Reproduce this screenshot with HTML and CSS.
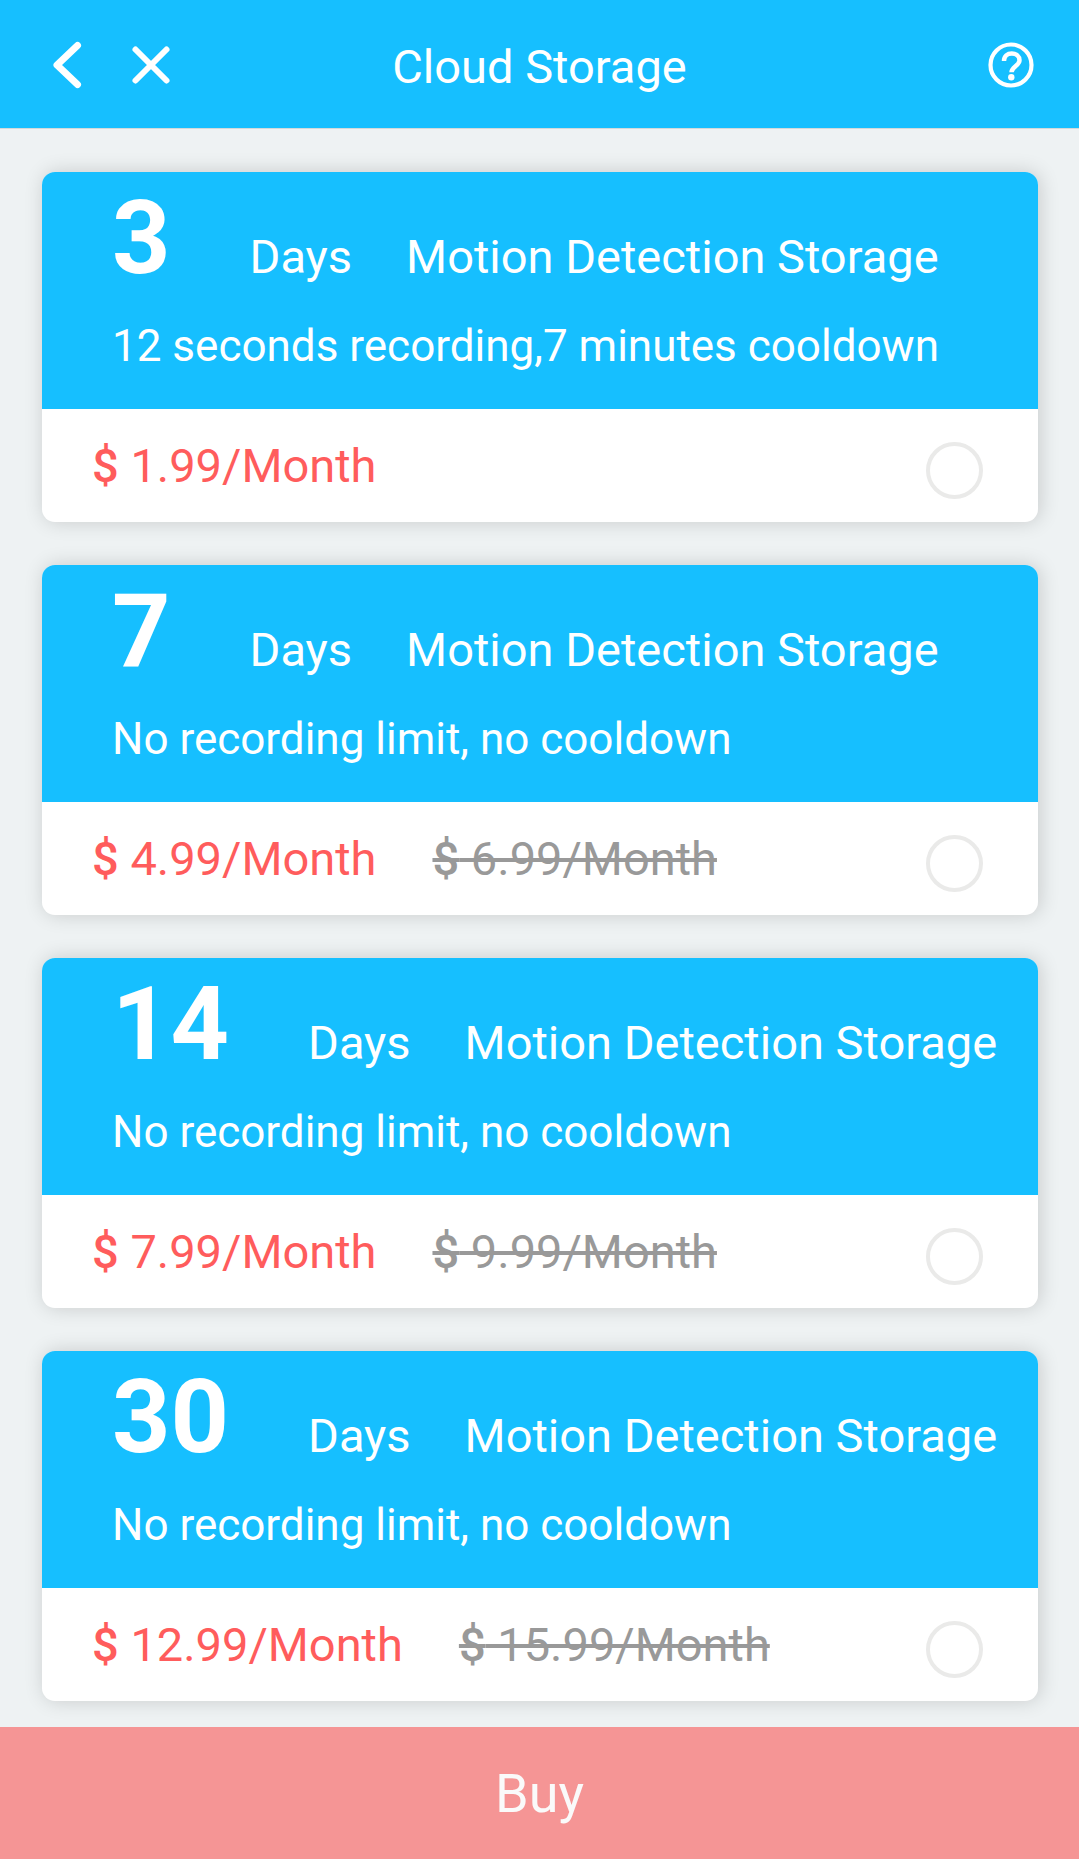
FILE: index.html
```html
<!DOCTYPE html>
<html lang="en">
<head>
    <meta charset="UTF-8">
    <meta name="viewport" content="width=device-width, initial-scale=1.0">
    <title>Cloud Storage</title>
    <link rel="stylesheet" href="styles.css">
</head>
<body>

<header class="topbar">
    <div class="topbar-left">
        <button type="button" class="icon-button" aria-label="Back">
            <svg viewBox="0 0 48 48"><path d="M33.500 4.500L13 24l20.500 19.500" stroke-width="7"/></svg>
        </button>
        <button type="button" class="icon-button" aria-label="Close">
            <svg viewBox="0 0 48 48"><path d="M8.500 8.500l31 31M39.500 8.500l-31 31" stroke-width="6"/></svg>
        </button>
    </div>
    <h1 class="title">Cloud Storage</h1>
    <div class="topbar-right">
        <button type="button" class="icon-button" aria-label="Help">
            <svg viewBox="0 0 48 48">
                <circle cx="24" cy="24" r="20.500" stroke-width="4.200"/>
                <path d="M17 20c0-5 3.500-7.500 7.800-7.500 4.500 0 7.700 2.800 7.700 6.800 0 5.500-8 6.500-8 12" stroke-width="4.500" stroke-linecap="butt"/>
                <circle class="dot" cx="24.300" cy="36.200" r="3.200"/>
            </svg>
        </button>
    </div>
</header>

<form class="page" id="planForm">
    <main class="plans">
        <label class="plan">
            <span class="plan-info">
                <span class="plan-head">
                    <strong class="plan-count">3</strong>
                    <span class="plan-unit">Days</span>
                    <span class="plan-type">Motion Detection Storage</span>
                </span>
                <span class="plan-desc">12 seconds recording,7 minutes cooldown</span>
            </span>
            <span class="plan-price">
                <span class="price"><span class="currency">$</span> 1.99/Month</span>
                <input type="radio" class="plan-radio" name="plan" value="3">
            </span>
        </label>

        <label class="plan">
            <span class="plan-info">
                <span class="plan-head">
                    <strong class="plan-count">7</strong>
                    <span class="plan-unit">Days</span>
                    <span class="plan-type">Motion Detection Storage</span>
                </span>
                <span class="plan-desc">No recording limit, no cooldown</span>
            </span>
            <span class="plan-price">
                <span class="price"><span class="currency">$</span> 4.99/Month</span>
                <s class="old-price"><span class="currency">$</span> 6.99/Month</s>
                <input type="radio" class="plan-radio" name="plan" value="7">
            </span>
        </label>

        <label class="plan">
            <span class="plan-info">
                <span class="plan-head">
                    <strong class="plan-count">14</strong>
                    <span class="plan-unit">Days</span>
                    <span class="plan-type">Motion Detection Storage</span>
                </span>
                <span class="plan-desc">No recording limit, no cooldown</span>
            </span>
            <span class="plan-price">
                <span class="price"><span class="currency">$</span> 7.99/Month</span>
                <s class="old-price"><span class="currency">$</span> 9.99/Month</s>
                <input type="radio" class="plan-radio" name="plan" value="14">
            </span>
        </label>

        <label class="plan">
            <span class="plan-info">
                <span class="plan-head">
                    <strong class="plan-count">30</strong>
                    <span class="plan-unit">Days</span>
                    <span class="plan-type">Motion Detection Storage</span>
                </span>
                <span class="plan-desc">No recording limit, no cooldown</span>
            </span>
            <span class="plan-price">
                <span class="price"><span class="currency">$</span> 12.99/Month</span>
                <s class="old-price"><span class="currency">$</span> 15.99/Month</s>
                <input type="radio" class="plan-radio" name="plan" value="30">
            </span>
        </label>
    </main>

    <button type="submit" class="buy-button">Buy</button>
</form>

</body>
</html>
```

FILE: styles.css
```css
* {
    box-sizing: border-box;
}
body {
    display: flex;
    flex-direction: column;
    min-height: 100vh;
    margin: 0;
    font-family: Roboto, sans-serif;
    font-size: 47px;
    background-color: #eef2f3;
    color: #fff;
}
.topbar {
    display: grid;
    grid-template-columns: 1fr auto 1fr;
    align-items: center;
    height: 129px;
    padding: 2px 44px 0;
    background-color: #16bfff;
    border-bottom: 1px solid #d3d9db;
}
.topbar-left {
    display: flex;
    gap: 35px;
}
.topbar-right {
    display: flex;
    justify-content: flex-end;
}
.title {
    margin: 0;
    padding-top: 4px;
    font-size: 47px;
    font-weight: 400;
    line-height: 56px;
}
.icon-button {
    width: 48px;
    height: 48px;
    padding: 0;
    border: none;
    background: none;
    cursor: pointer;
}
.icon-button svg {
    display: block;
    width: 48px;
    height: 48px;
    fill: none;
    stroke: #fff;
    stroke-linecap: round;
    stroke-linejoin: round;
}
.icon-button .dot {
    fill: #fff;
    stroke: none;
}
.page {
    display: flex;
    flex: 1;
    flex-direction: column;
}
.plans {
    display: flex;
    flex: 1;
    flex-direction: column;
    gap: 43px;
    padding: 43px 41px 24px 42px;
}
.plan {
    display: block;
    overflow: hidden;
    border-radius: 13px;
    background-color: #fff;
    box-shadow: 2px 0 20px rgba(0, 0, 0, 0.16);
    cursor: pointer;
}
.plan-info {
    display: block;
    padding: 6px 0 33px 70px;
    background-color: #16bfff;
}
.plan-head {
    display: flex;
    align-items: baseline;
    height: 138px;
    line-height: 120px;
    white-space: nowrap;
}
.plan-count {
    margin-right: 79px;
    font-size: 102px;
    font-weight: 700;
}
.plan-unit {
    margin-right: 54px;
}
.plan-desc {
    display: block;
    font-size: 44px;
    line-height: 60px;
}
.plan-price {
    display: flex;
    align-items: flex-end;
    gap: 56px;
    padding: 24px 55px 23px 50px;
    line-height: 66px;
}
.price {
    color: #ff5c5c;
}
.old-price {
    color: #999;
    text-decoration-thickness: 4px;
}
.currency {
    font-weight: 500;
}
.plan-radio {
    width: 57px;
    height: 57px;
    margin: 0 0 0 auto;
    border: 4px solid #eaeae9;
    border-radius: 50%;
    background-color: #fff;
    appearance: none;
    cursor: pointer;
}
.plan-radio:checked {
    border-color: #16bfff;
    background-color: #16bfff;
    box-shadow: inset 0 0 0 8px #fff;
}
.buy-button {
    height: 132px;
    border: none;
    background-color: #f59595;
    color: #fafafa;
    font-family: inherit;
    font-size: 54px;
    cursor: pointer;
}
```
